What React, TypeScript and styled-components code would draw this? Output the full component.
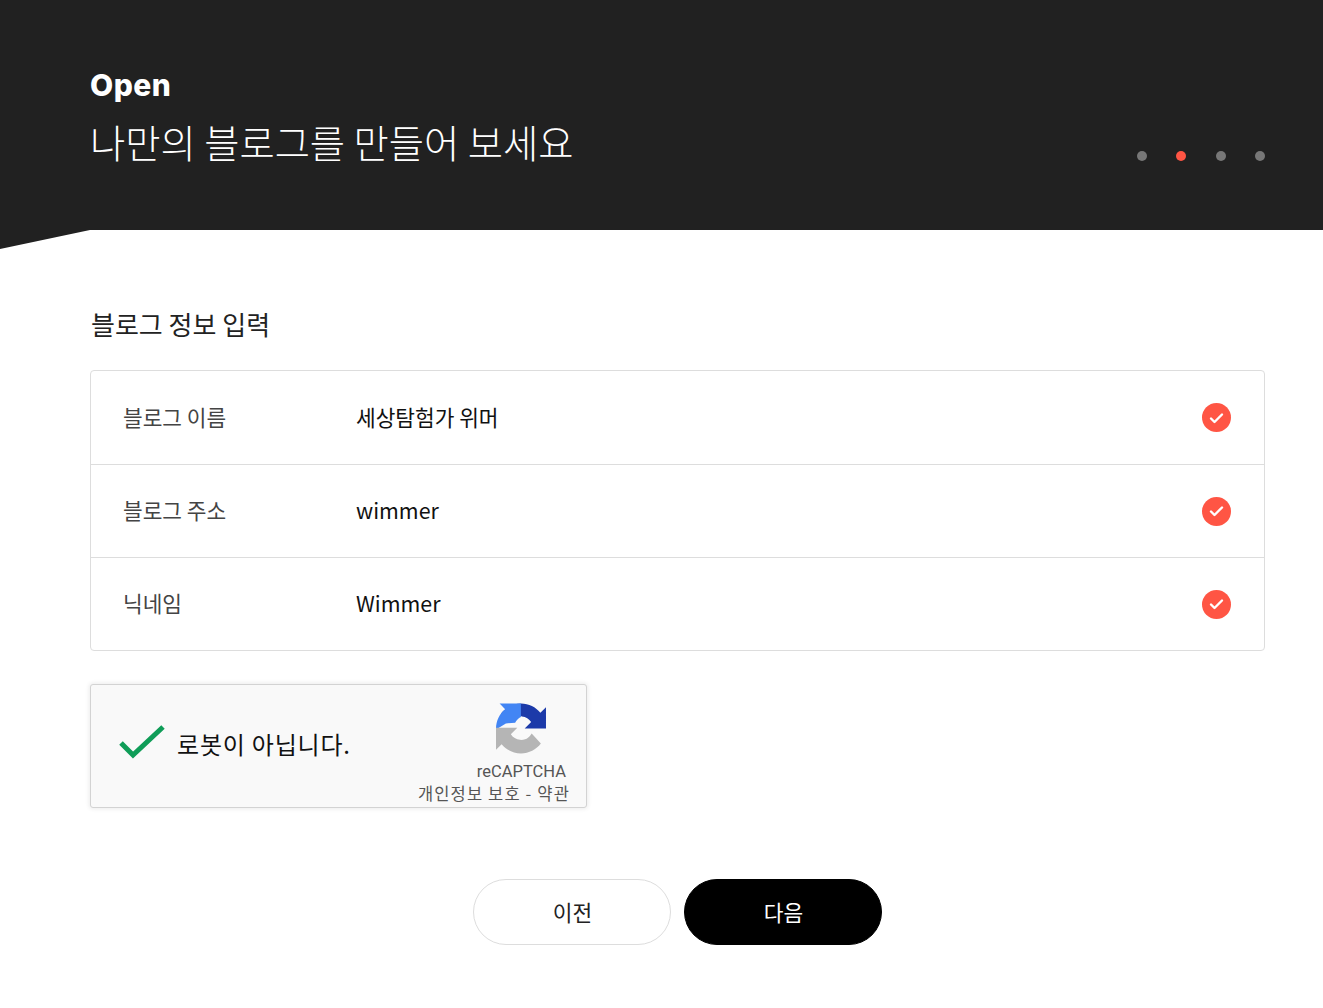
import React from 'react';
import styled, { createGlobalStyle } from 'styled-components';

const GlobalStyle = createGlobalStyle`
  html, body {
    margin: 0;
    padding: 0;
    background: #fff;
    font-family: "Noto Sans CJK KR", "Noto Sans", sans-serif;
  }
`;

const Page = styled.div`
  width: 1323px;
  height: 1008px;
  overflow: hidden;
`;

const Hero = styled.header`
  position: relative;
  box-sizing: border-box;
  height: 230px;
  padding: 65px 58px 0 90px;
  background: #212121;
  display: flex;
  justify-content: space-between;
  align-items: flex-end;

  &::after {
    content: '';
    position: absolute;
    left: 0;
    top: 100%;
    width: 90px;
    height: 19px;
    background: #212121;
    clip-path: polygon(0 0, 100% 0, 0 100%);
  }
`;

const HeroText = styled.div`
  align-self: flex-start;
`;

const Eyebrow = styled.div`
  font-family: Inter, sans-serif;
  font-weight: 800;
  font-size: 30px;
  letter-spacing: 0.5px;
  line-height: 40px;
  color: #fff;
`;

const Title = styled.h1`
  margin: 12px 0 0;
  font-weight: 300;
  font-size: 38.3px;
  line-height: 50px;
  color: #fff;
`;

const Steps = styled.div`
  display: flex;
  gap: 29.5px;
  margin-bottom: 69px;
`;

const Dot = styled.span<{ $active?: boolean }>`
  width: 10px;
  height: 10px;
  border-radius: 50%;
  background: ${(p) => (p.$active ? '#ff5544' : '#777')};
`;

const Content = styled.main`
  padding: 75px 58px 0 90px;
`;

const SectionTitle = styled.h2`
  margin: 0 0 27px 1px;
  font-weight: 400;
  font-size: 26px;
  line-height: 38px;
  color: #222;
`;

const InfoTable = styled.div`
  border: 1px solid #ddd;
  border-radius: 4px;
`;

const InfoRow = styled.div`
  box-sizing: border-box;
  height: 93px;
  display: flex;
  align-items: center;
  padding: 0 33px 0 32px;
  & + & {
    border-top: 1px solid #ddd;
  }
`;

const Label = styled.div`
  width: 233px;
  padding-bottom: 3px;
  font-size: 21.4px;
  color: #444;
`;

const Value = styled.div`
  flex: 1;
  padding-bottom: 3px;
  font-size: 21.4px;
  color: #111;
`;

const CheckBadge = styled.span`
  width: 29px;
  height: 29px;
  border-radius: 50%;
  background: #ff5544;
  display: flex;
  align-items: center;
  justify-content: center;
`;

const Captcha = styled.div`
  box-sizing: border-box;
  width: 497px;
  height: 124px;
  margin-top: 33px;
  padding: 0 16px 0 27px;
  background: #f9f9f9;
  border: 1px solid #d3d3d3;
  border-radius: 3px;
  box-shadow: 0 0 4px 1px rgba(0, 0, 0, 0.08);
  display: flex;
  align-items: center;
  justify-content: space-between;
`;

const CaptchaLeft = styled.div`
  display: flex;
  align-items: center;
  gap: 11px;
`;

const CaptchaMark = styled.svg`
  margin-bottom: 6px;
`;

const CaptchaLabel = styled.span`
  padding-bottom: 6px;
  font-size: 24px;
  letter-spacing: 0.8px;
  color: #111;
`;

const CaptchaBrand = styled.div`
  display: flex;
  flex-direction: column;
  align-items: flex-end;
  padding-top: 14px;
`;

const BrandMark = styled.div`
  display: flex;
  flex-direction: column;
  align-items: center;
  margin-right: 4px;
`;

const BrandName = styled.div`
  font-family: Roboto, "Liberation Sans", sans-serif;
  font-size: 16.5px;
  line-height: 20px;
  margin-top: 8px;
  color: #555;
`;

const BrandLinks = styled.div`
  font-size: 16.5px;
  letter-spacing: 1.15px;
  line-height: 22px;
  color: #555;
  white-space: nowrap;
`;

const Actions = styled.div`
  display: flex;
  justify-content: center;
  gap: 13px;
  margin-top: 71px;
`;

const ActionButton = styled.button<{ $primary?: boolean }>`
  width: 198px;
  height: 66px;
  padding: 0 0 2px 1px;
  border-radius: 33px;
  border: 1px solid ${(p) => (p.$primary ? '#000' : '#ddd')};
  background: ${(p) => (p.$primary ? '#000' : '#fff')};
  color: ${(p) => (p.$primary ? '#fff' : '#222')};
  font-family: inherit;
  font-size: 21.4px;
`;

const rows = [
  { label: '블로그 이름', value: '세상탐험가 위머' },
  { label: '블로그 주소', value: 'wimmer' },
  { label: '닉네임', value: 'Wimmer' },
];

const RecaptchaLogo = () => (
  <svg width="50" height="51" viewBox="0 0 64 64">
    <path fill="#1c3aa9" d="M64 31.955l-.033-1.37V4.687l-7.16 7.16C50.948 4.674 42.033.093 32.05.093c-10.4 0-19.622 4.96-25.458 12.64l11.736 11.86a15.55 15.55 0 0 1 4.754-5.334c2.05-1.6 4.952-2.906 8.968-2.906.485 0 .86.057 1.135.163 4.976.393 9.29 3.14 11.83 7.124l-8.307 8.307 32.29.001" />
    <path fill="#4285f4" d="M31.862.094l-1.37.033H4.594l7.16 7.16C4.58 13.147 0 22.06 0 32.046c0 .4.01.8.02 1.2L12.64 25.5l11.86-.9c.8-1.6 1.8-3 3-4.2 1.3-1.3 2.7-2.2 4.36-3V.094" />
    <path fill="#b5b5b5" d="M.001 32l.033 1.37v25.898l7.16-7.16c5.86 7.173 14.774 11.754 24.76 11.754 10.4 0 19.622-4.96 25.458-12.64L45.676 38.36a15.55 15.55 0 0 1-4.754 5.334c-2.05 1.6-4.952 2.906-8.968 2.906-.485 0-.86-.057-1.135-.163-4.976-.393-9.29-3.14-11.83-7.124l8.307-8.307H.001" />
  </svg>
);

export default function App() {
  return (
    <Page>
      <GlobalStyle />
      <Hero>
        <HeroText>
          <Eyebrow>Open</Eyebrow>
          <Title>나만의 블로그를 만들어 보세요</Title>
        </HeroText>
        <Steps>
          <Dot />
          <Dot $active />
          <Dot />
          <Dot />
        </Steps>
      </Hero>
      <Content>
        <SectionTitle>블로그 정보 입력</SectionTitle>
        <InfoTable>
          {rows.map((row) => (
            <InfoRow key={row.label}>
              <Label>{row.label}</Label>
              <Value>{row.value}</Value>
              <CheckBadge>
                <svg width="15" height="12" viewBox="0 0 15 12">
                  <path d="M2 6.500L5.500 10L13 2.500" fill="none" stroke="#fff" strokeWidth="2.400" strokeLinecap="round" strokeLinejoin="round" />
                </svg>
              </CheckBadge>
            </InfoRow>
          ))}
        </InfoTable>
        <Captcha>
          <CaptchaLeft>
            <CaptchaMark width="48" height="38" viewBox="0 0 48 38">
              <path d="M3 19L15 31L45 3" fill="none" stroke="#0f9d58" strokeWidth="5" />
            </CaptchaMark>
            <CaptchaLabel>로봇이 아닙니다.</CaptchaLabel>
          </CaptchaLeft>
          <CaptchaBrand>
            <BrandMark>
              <RecaptchaLogo />
              <BrandName>reCAPTCHA</BrandName>
            </BrandMark>
            <BrandLinks>개인정보 보호 - 약관</BrandLinks>
          </CaptchaBrand>
        </Captcha>
        <Actions>
          <ActionButton>이전</ActionButton>
          <ActionButton $primary>다음</ActionButton>
        </Actions>
      </Content>
    </Page>
  );
}
